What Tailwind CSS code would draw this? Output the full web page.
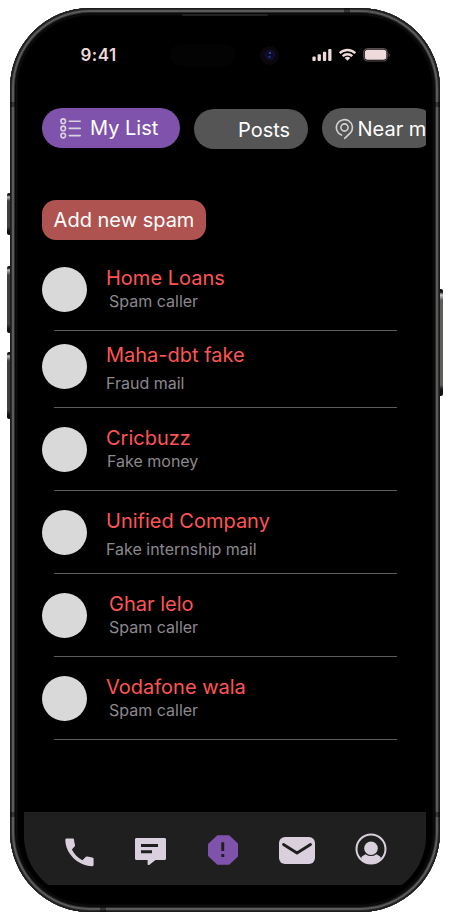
<!DOCTYPE html>
<html lang="en">
<head>
<meta charset="utf-8">
<meta name="viewport" content="width=device-width, initial-scale=1">
<title>Spam list</title>
<script src="https://cdn.jsdelivr.net/npm/@tailwindcss/browser@4"></script>
</head>
<body class="bg-white overflow-hidden font-[Inter,sans-serif] font-normal">
<div class="relative w-[450px] h-[920px] px-[10px] pt-[8px]">
  <!-- side buttons -->
  <div class="absolute left-[7px] top-[193px] w-[5px] h-[42px] rounded-l-[2px] bg-[linear-gradient(#111_0_2px,#bbb_4px,#3f3e3a_8px,#3f3e3a_34px,#111_38px)]"></div>
  <div class="absolute left-[7px] top-[266px] w-[5px] h-[67px] rounded-l-[2px] bg-[linear-gradient(#111_0_2px,#bbb_4px,#3f3e3a_9px,#3f3e3a_58px,#111_63px)]"></div>
  <div class="absolute left-[7px] top-[352px] w-[5px] h-[67px] rounded-l-[2px] bg-[linear-gradient(#111_0_2px,#bbb_4px,#3f3e3a_9px,#3f3e3a_58px,#111_63px)]"></div>
  <div class="absolute left-[438px] top-[289px] w-[5px] h-[107px] rounded-r-[2px] bg-[linear-gradient(#111_0_3px,#ccc_6px,#5f5d57_11px,#5f5d57_96px,#111_101px)]"></div>

  <!-- phone body -->
  <div class="relative w-[430px] h-[904px] rounded-[80px] bg-black p-[14px] shadow-[inset_0_0_0_1px_#1c1c1c,inset_0_0_0_2px_#2c2c2c,inset_0_0_0_4px_#5a5a5a,inset_0_0_0_5px_#2a2a2a,inset_0_0_0_6px_#080808,inset_0_0_2px_7px_#141414]">
    <div class="w-[402px] h-[876px] rounded-[62px] overflow-hidden flex flex-col bg-black">
      <!-- status bar -->
      <header class="relative h-[66px] shrink-0 pl-[56.5px] pr-[35px] pt-[22px] flex justify-between">
        <span class="text-[17px] leading-[22px] font-semibold tracking-[0.5px] text-[#eedada]">9:41</span>
        <div class="absolute left-[146px] top-[22px] w-[65px] h-[22px] rounded-full bg-[#030303]"></div>
        <div class="absolute left-[236px] top-[23.5px] size-[19px] rounded-full bg-[#0b070c] flex items-center justify-center">
          <div class="size-[10px] rounded-full bg-[#0b0b30] border border-[#15153f] flex flex-col items-center justify-center gap-[2px]">
            <i class="w-[2px] h-[2px] rounded-full bg-[#4a5590]"></i><i class="w-[3px] h-[2px] rounded-full bg-[#22306f]"></i>
          </div>
        </div>
        <div class="flex gap-[6px] pt-[4px] items-start text-[#eedada]">
          <svg class="w-[20px] h-[13px]" viewBox="0 0 20 13" fill="currentColor"><rect x=".4" y="8.600" width="3.300" height="4.400" rx="1"/><rect x="5.600" y="6.300" width="3.300" height="6.700" rx="1"/><rect x="10.900" y="3.700" width="3.300" height="9.300" rx="1"/><rect x="16.200" y=".9" width="3.300" height="12.100" rx="1"/></svg>
          <svg class="w-[19px] h-[13px]" viewBox="0 0 19 13" fill="none" stroke="currentColor" stroke-width="2.400"><path d="M1.700 5.100a11.200 11.200 0 0 1 15.600 0M4.700 8.200a6.900 6.900 0 0 1 9.600 0"/><path d="M9.500 12.800 6.700 10a3.900 3.900 0 0 1 5.600 0Z" fill="currentColor" stroke="none"/></svg>
          <svg class="w-[28px] h-[14px]" viewBox="0 0 28 14"><rect x=".8" y=".6" width="23.400" height="12.400" rx="4" fill="none" stroke="#5a4f50" stroke-width="1.200"/><rect x="1.900" y="1.800" width="21.400" height="10" rx="2.800" fill="currentColor"/><path d="M25.700 5v4c1.500-.7 1.500-3.300 0-4Z" fill="#5a4f50"/></svg>
        </div>
      </header>

      <!-- filter chips -->
      <div class="mt-[20px] pl-[18px] flex items-start gap-[14px] shrink-0 text-[20px] leading-[24px] text-white whitespace-nowrap">
        <button class="w-[138px] h-[40px] shrink-0 rounded-full bg-[#7f53ac] flex items-center pl-[18px] gap-[9px]">
          <svg class="w-[21px] h-[22px] shrink-0" viewBox="0 0 21 22" fill="none" stroke="#d9d2de" stroke-width="1.600" stroke-linecap="round"><circle cx="3.200" cy="4.200" r="2.300"/><circle cx="3.200" cy="11.400" r="2.300"/><circle cx="3.200" cy="18.600" r="2.300"/><path d="M9.300 4.200h10.900M9.300 11.400h10.900M9.300 18.600h10.900"/></svg>
          <span>My List</span>
        </button>
        <button class="w-[114px] h-[40px] mt-px shrink-0 rounded-full bg-[#555] flex items-center pl-[44px] pt-[2px]">Posts</button>
        <button class="w-[114px] h-[40px] shrink-0 rounded-full bg-[#555] flex items-center pl-[13px] gap-[3.500px] pt-[2px]">
          <svg class="w-[19px] h-[22px] shrink-0" viewBox="0 0 19 22" fill="none" stroke="#d2d2d2" stroke-width="1.600" stroke-linecap="round"><circle cx="9.500" cy="9.500" r="3.600"/><path d="M6.500 17.100A8 8 0 1 1 15.600 14.700L9.700 20.300"/></svg>
          <span>Near me</span>
        </button>
      </div>

      <button class="ml-[18px] mt-[51px] w-[164px] h-[40px] shrink-0 rounded-[14px] bg-[#af5350] text-white text-[20px] leading-[24px] whitespace-nowrap">Add new spam</button>

      <!-- spam entries -->
      <ul class="mt-[27px] pl-[18px] w-[373px] whitespace-nowrap text-[20px] leading-[24px] text-[#ff5454]">
        <li class="h-[64px] relative flex gap-[19px]"><div class="size-[45px] rounded-full bg-[#d9d9d9]"></div><div class="-mt-px"><p>Home Loans</p><p class="mt-[2px] pl-[3px] text-[16px] leading-[19px] text-[#8c888e]">Spam caller</p></div><hr class="absolute left-[12px] right-0 bottom-0 border-[#5c5c5c]"></li>
        <li class="h-[64px] mt-[13px] relative flex gap-[19px]"><div class="size-[45px] rounded-full bg-[#d9d9d9]"></div><div class="-mt-px"><p>Maha-dbt fake</p><p class="mt-[7px] text-[16px] leading-[19px] text-[#8c888e]">Fraud mail</p></div><hr class="absolute left-[12px] right-0 bottom-0 border-[#5c5c5c]"></li>
        <li class="h-[64px] mt-[19px] relative flex gap-[19px]"><div class="size-[45px] rounded-full bg-[#d9d9d9]"></div><div class="-mt-px"><p>Cricbuzz</p><p class="mt-[2px] pl-px text-[16px] leading-[19px] text-[#8c888e]">Fake money</p></div><hr class="absolute left-[12px] right-0 bottom-0 border-[#5c5c5c]"></li>
        <li class="h-[64px] mt-[19px] relative flex gap-[19px]"><div class="size-[45px] rounded-full bg-[#d9d9d9]"></div><div class="-mt-px"><p>Unified Company</p><p class="mt-[7px] text-[16px] leading-[19px] text-[#8c888e]">Fake internship mail</p></div><hr class="absolute left-[12px] right-0 bottom-0 border-[#5c5c5c]"></li>
        <li class="h-[64px] mt-[19px] relative flex gap-[22px]"><div class="size-[45px] rounded-full bg-[#d9d9d9]"></div><div class="-mt-px"><p>Ghar lelo</p><p class="mt-[2px] text-[16px] leading-[19px] text-[#8c888e]">Spam caller</p></div><hr class="absolute left-[12px] right-0 bottom-0 border-[#5c5c5c]"></li>
        <li class="h-[64px] mt-[19px] relative flex gap-[19px]"><div class="size-[45px] rounded-full bg-[#d9d9d9]"></div><div class="-mt-px"><p>Vodafone wala</p><p class="mt-[2px] pl-[3px] text-[16px] leading-[19px] text-[#8c888e]">Spam caller</p></div><hr class="absolute left-[12px] right-0 bottom-0 border-[#5c5c5c]"></li>
      </ul>

      <!-- bottom navigation -->
      <nav class="mt-auto mb-[13px] h-[73px] shrink-0 bg-[#1f1f1f] pl-[41px] flex items-start text-[#dacfdc]">
        <svg class="mt-[26px] w-[29px] h-[29px]" viewBox="0 0 29 29" fill="currentColor"><path d="M1.700.5h6c.7 0 1.200.4 1.300 1.100.1 1.800.5 3.500 1 5.100.2.6 0 1.200-.4 1.700L6.900 11.600c2.200 4.600 6 8.400 10.600 10.600l3.100-3.200c.5-.4 1-.6 1.700-.4 1.600.5 3.300.8 5.100.9.7.1 1.200.6 1.200 1.300v6c0 1-.6 1.500-1.500 1.400C12.600 27.600.6 15.600.3 2 .3 1.100.7.5 1.700.5Z"/></svg>
        <svg class="mt-[26px] ml-[41px] w-[31px] h-[28px]" viewBox="0 0 31 28"><path d="M1.500 0h28c.9 0 1.500.6 1.500 1.500v19c0 .9-.6 1.500-1.500 1.500H20.500l-6 4.800c-1 .6-1.900.2-1.900-.9V22H1.500C.6 22 0 21.400 0 20.500v-19C0 .6.600 0 1.500 0Z" fill="currentColor"/><path d="M6 7.500h17M6 13.700h11" stroke="#1f1f1f" stroke-width="3"/></svg>
        <svg class="mt-[23px] ml-[41.500px] w-[30.500px] h-[30px]" viewBox="0 0 31 30"><path d="M9.500 0h12L31 9v12l-9.500 9h-12L0 21V9Z" fill="#7f53ac"/><path d="M15 7v9M15 19v3" stroke="#1f1f1f" stroke-width="3"/></svg>
        <svg class="mt-[25px] ml-[41px] w-[36px] h-[27px]" viewBox="0 0 36 27"><rect width="36" height="27" rx="6" fill="currentColor"/><path d="M4.500 7.500 18 16 31.500 7.500" fill="none" stroke="#1f1f1f" stroke-width="2.800" stroke-linecap="round" stroke-linejoin="round"/></svg>
        <svg class="mt-[21px] ml-[40px] w-[32px] h-[32px]" viewBox="0 0 32 32"><circle cx="16" cy="16" r="14.500" fill="none" stroke="currentColor" stroke-width="2"/><circle cx="16" cy="15.200" r="6.800" fill="currentColor"/><path d="M6.200 24.500 7.200 23.300 10.600 21.200a8.600 8.600 0 0 0 10.800 0L24.800 23.300 25.800 24.500 25 27.800C20 32 12 32 7 27.800Z" fill="currentColor"/></svg>
      </nav>
    </div>
    <!-- antenna bands -->
    <div class="absolute left-0 top-[94px] w-[5px] h-[5px] bg-black/40"></div>
    <div class="absolute right-0 top-[94px] w-[5px] h-[5px] bg-black/40"></div>
    <div class="absolute left-0 top-[804px] w-[5px] h-[5px] bg-black/40"></div>
    <div class="absolute right-0 top-[804px] w-[5px] h-[5px] bg-black/40"></div>
    <div class="absolute left-[334px] top-0 w-[6px] h-[5px] bg-black/40"></div>
    <div class="absolute left-[90px] bottom-0 w-[6px] h-[5px] bg-black/40"></div>
    <div class="absolute left-[172px] top-[6px] w-[86px] h-[2px] rounded-full bg-[#222]"></div>
  </div>
</div>
</body>
</html>
